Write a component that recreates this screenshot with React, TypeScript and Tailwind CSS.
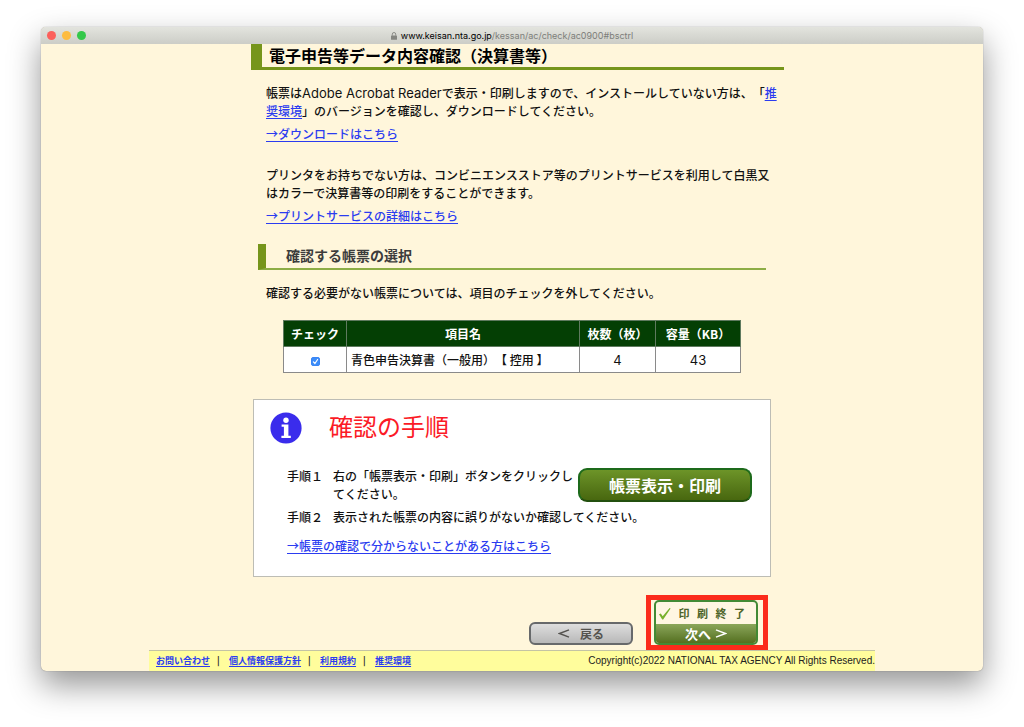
import type { ReactNode } from "react";

const link = "text-[#2b3cf0] underline underline-offset-2";

function TextLink({ children }: { children: ReactNode }) {
  return (
    <a href="#" className={link}>
      {children}
    </a>
  );
}

function TitleBar() {
  return (
    <header className="flex h-[17px] items-center bg-linear-to-b from-[#e3e4de] to-[#cccdc7] px-[6px]">
      <div className="flex flex-1 gap-[6px]">
        <span className="size-[9px] rounded-full bg-[#fc605b]" />
        <span className="size-[9px] rounded-full bg-[#fdbc40]" />
        <span className="size-[9px] rounded-full bg-[#34c84a]" />
      </div>
      <div className="flex items-center gap-[4px] pt-px text-[9px] leading-[16px] text-[#7d7e7a]">
        <svg viewBox="0 0 6 8" className="h-[8px] w-[6px]" aria-hidden="true">
          <rect x="0" y="3.4" width="6" height="4.4" rx="0.6" fill="#858681" />
          <path d="M1.3 3.6V2.2a1.7 1.7 0 0 1 3.4 0v1.4" fill="none" stroke="#858681" strokeWidth="0.9" />
        </svg>
        <p className="font-[Inter,'Liberation_Sans',sans-serif]">
          <span className="text-black">www.keisan.nta.go.jp</span>
          /kessan/ac/check/ac0900#bsctrl
        </p>
      </div>
      <div className="flex-1" />
    </header>
  );
}

function FormTable() {
  const head = "border border-[#5f7a5f] font-bold";
  const cell = "border border-[#8a8a8a]";
  return (
    <table className="mt-[18px] ml-[32px] h-[53px] w-[458px] table-fixed border-collapse text-center text-[12px] leading-[18px]">
      <colgroup>
        <col className="w-[63px]" />
        <col />
        <col className="w-[76px]" />
        <col className="w-[85px]" />
      </colgroup>
      <thead className="h-[26px] bg-[#043f04] text-white">
        <tr>
          <th className={head}>チェック</th>
          <th className={head}>項目名</th>
          <th className={head}>枚数（枚）</th>
          <th className={head}>容量（KB）</th>
        </tr>
      </thead>
      <tbody className="h-[26px] bg-white">
        <tr>
          <td className={cell}>
            <label className="inline-grid place-items-center align-middle">
              <input
                type="checkbox"
                defaultChecked
                aria-label="青色申告決算書（一般用）"
                className="peer col-start-1 row-start-1 size-[9px] appearance-none rounded-[2px] border border-[#888] checked:border-[#3b86f5] checked:bg-[#3b8cf8]"
              />
              <svg viewBox="0 0 9 9" className="pointer-events-none col-start-1 row-start-1 size-[9px] opacity-0 peer-checked:opacity-100" aria-hidden="true">
                <path d="M2.4 4.9 3.9 6.5 6.6 2.5" fill="none" stroke="#fff" strokeWidth="1.2" strokeLinecap="round" />
              </svg>
            </label>
          </td>
          <td className={`${cell} pl-[4px] text-left`}>青色申告決算書（一般用）【 控用 】</td>
          <td className={`${cell} font-[Inter,sans-serif] text-[13px] font-normal`}>4</td>
          <td className={`${cell} font-[Inter,sans-serif] text-[13px] font-normal`}>43</td>
        </tr>
      </tbody>
    </table>
  );
}

function StepsCard() {
  return (
    <section className="mt-[26px] ml-[2px] w-[518px] border border-[#bdbdb5] bg-white px-[16px] pt-[10px] pb-[21px]">
      <div className="flex items-center gap-[27px]">
        <svg viewBox="0 0 32 32" className="size-[32px]" aria-hidden="true">
          <circle cx="16" cy="16" r="15.6" fill="#3a2cec" />
          <circle cx="16" cy="8.2" r="2.7" fill="#fff" />
          <path d="M11.6 12.6h6.8v11.2h2.4v2.2h-9.4v-2.2h2.5v-9h-2.3z" fill="#fff" />
        </svg>
        <h3 className="pb-[4px] text-[24px] leading-[32px] font-normal text-[#fb1a26]">確認の手順</h3>
      </div>
      <div className="mt-[21px] ml-[17px] flex items-start justify-between">
        <dl className="grid grid-cols-[46px_auto] gap-y-[5px]">
          <dt>手順１</dt>
          <dd className="whitespace-nowrap">
            右の「帳票表示・印刷」ボタンをクリックし
            <br />
            てください。
          </dd>
          <dt>手順２</dt>
          <dd className="w-0 whitespace-nowrap">表示された帳票の内容に誤りがないか確認してください。</dd>
        </dl>
        <button
          type="button"
          className="mt-px mr-[2px] h-[34px] w-[174px] shrink-0 rounded-[9px] border-2 border-[#1d6a1b] border-b-[#23500f] bg-linear-to-b from-[#6d9428] to-[#48670f] text-[16px] leading-[28px] font-bold text-white"
        >
          帳票表示・印刷
        </button>
      </div>
      <p className="mt-[11px] ml-[17px]">
        <TextLink>→帳票の確認で分からないことがある方はこちら</TextLink>
      </p>
    </section>
  );
}

function Actions() {
  return (
    <div className="mt-[18px] flex w-[517px] items-end justify-end gap-[13px]">
      <button
        type="button"
        className="mb-[5px] flex h-[23px] w-[104px] items-center justify-center gap-[10px] rounded-[6px] border-2 border-[#67696b] bg-linear-to-b from-[#dedede] to-[#b8b8b8] text-[12px] leading-[18px] font-bold text-[#55534f]"
      >
        <svg viewBox="0 0 12 9" className="h-[9px] w-[12px]" aria-hidden="true">
          <path d="M11 0.8 1.5 4.5 11 8.2" fill="none" stroke="#55534f" strokeWidth="1.4" />
        </svg>
        戻る
      </button>
      <div className="border-[5px] border-[#fb2b1b] pr-[5px] pl-[3px]">
        <button
          type="button"
          className="flex h-[45px] w-[104px] flex-col overflow-hidden rounded-[5px] border-2 border-[#438a35] bg-[#fff6e2] font-bold"
        >
          <span className="flex h-[22px] w-full items-center justify-between pr-[11px] pl-[2px] text-[11px] leading-[20px] text-[#4d6428]">
            <svg viewBox="0 0 13 13" className="size-[13px]" aria-hidden="true">
              <path d="M1 7.2 2.8 6.4 4.7 9.2 11.6 1 12.6 1.4 5.2 12.4 4.2 12.4z" fill="#79b02c" />
            </svg>
            <span>印</span>
            <span>刷</span>
            <span>終</span>
            <span>了</span>
          </span>
          <span className="flex w-full flex-1 items-center justify-center gap-[4px] bg-linear-to-b from-[#8ba65a] to-[#55701f] text-[13px] leading-[18px] text-white">
            次へ
            <svg viewBox="0 0 12 9" className="h-[9px] w-[12px]" aria-hidden="true">
              <path d="M1 0.8 10.5 4.5 1 8.2" fill="none" stroke="#fff" strokeWidth="1.4" />
            </svg>
          </span>
        </button>
      </div>
    </div>
  );
}

function Footer() {
  const items = ["お問い合わせ", "個人情報保護方針", "利用規約", "推奨環境"];
  return (
    <footer className="flex h-[21px] items-center justify-between border-t border-[#c4c4a4] bg-[#fffd9c] pl-[7px] text-[9px] leading-[18px]">
      <nav className="flex font-bold">
        {items.map((item, i) => (
          <span key={item} className="flex">
            {i > 0 && <span className="w-[19px] pl-[7px] text-[#222]">|</span>}
            <TextLink>{item}</TextLink>
          </span>
        ))}
      </nav>
      <small className="font-['Liberation_Sans',sans-serif] text-[10px] text-[#222]">
        Copyright(c)2022 NATIONAL TAX AGENCY All Rights Reserved.
      </small>
    </footer>
  );
}

export default function App() {
  return (
    <div className="min-h-screen bg-white px-[41px] pt-[27px] pb-[55px] font-['Noto_Sans_CJK_JP','Liberation_Sans',sans-serif] text-[12px] leading-[18px] text-[#111] [text-spacing-trim:space-all]">
      <div className="overflow-hidden rounded-[5px] bg-[#fff6db] shadow-[0_14px_32px_rgba(0,0,0,0.42),0_0_1px_rgba(0,0,0,0.5)]">
        <TitleBar />
        <div className="mx-auto w-full max-w-[726px]">
          <main className="pl-[102px] font-medium">
            <h1 className="h-[26px] w-[533px] border-b-[3px] border-l-[11px] border-[#76951b] pl-[7px] text-[16px] leading-[22px] font-bold text-black">
              電子申告等データ内容確認（決算書等）
            </h1>
            <div className="pl-[15px]">
              <p className="mt-[14px] whitespace-nowrap">
                帳票は<span className="font-[Inter,sans-serif] text-[13px] font-normal">Adobe Acrobat Reader</span>
                で表示・印刷しますので、インストールしていない方は、「
                <a href="#" className={link}>
                  推<br />
                  奨環境
                </a>
                」のバージョンを確認し、ダウンロードしてください。
              </p>
              <p className="mt-[5px]">
                <TextLink>→ダウンロードはこちら</TextLink>
              </p>
              <p className="mt-[23px] whitespace-nowrap">
                プリンタをお持ちでない方は、コンビニエンスストア等のプリントサービスを利用して白黒又
                <br />
                はカラーで決算書等の印刷をすることができます。
              </p>
              <p className="mt-[5px]">
                <TextLink>→プリントサービスの詳細はこちら</TextLink>
              </p>
            </div>
            <h2 className="mt-[19px] ml-[7px] h-[26px] w-[508px] border-b-2 border-l-8 border-b-[#8dad45] border-l-[#76951b] pl-[20px] text-[14px] leading-[22px] font-bold text-[#3c3c3c]">
              確認する帳票の選択
            </h2>
            <p className="mt-[14px] pl-[15px]">
              確認する必要がない帳票については、項目のチェックを外してください。
            </p>
            <FormTable />
            <StepsCard />
            <Actions />
          </main>
          <Footer />
        </div>
      </div>
    </div>
  );
}
